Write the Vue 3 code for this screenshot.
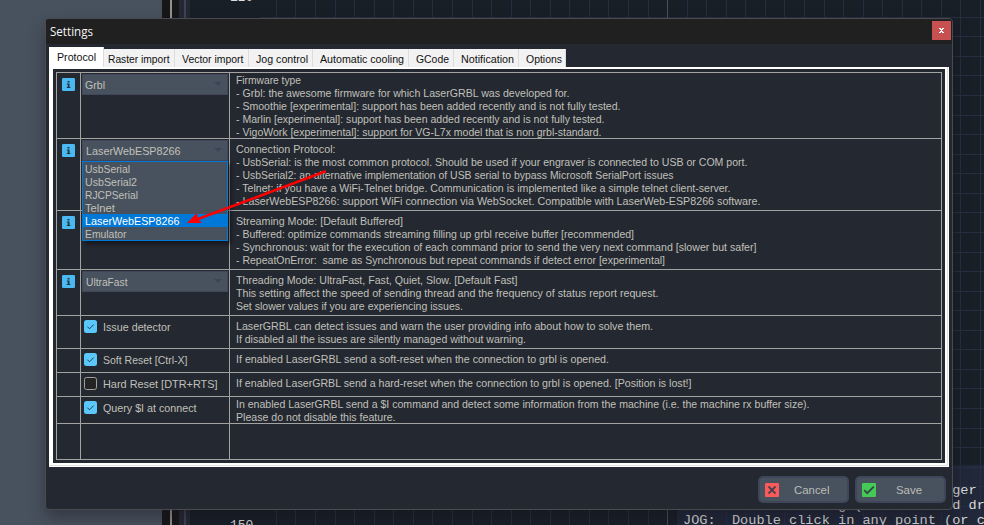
<script setup>
const tabs = [
  { label: 'Protocol', width: 39, box: 55, active: true },
  { label: 'Raster import', width: 61.5, box: 71 },
  { label: 'Vector import', width: 61.5, box: 74 },
  { label: 'Jog control', width: 52, box: 64 },
  { label: 'Automatic cooling', width: 84, box: 96 },
  { label: 'GCode', width: 33, box: 45 },
  { label: 'Notification', width: 53, box: 65 },
  { label: 'Options', width: 36, box: 47 },
]

const rows = [
  {
    kind: 'combo', value: 'Grbl', width: 20, tight: true,
    lines: [
      ['Firmware type', 65],
      ['- Grbl: the awesome firmware for which LaserGRBL was developed for.', 333.5],
      ['- Smoothie [experimental]: support has been added recently and is not fully tested.', 384.5],
      ['- Marlin [experimental]: support has been added recently and is not fully tested.', 368.5],
      ['- VigoWork [experimental]: support for VG-L7x model that is non grbl-standard.', 365.5],
    ],
  },
  {
    kind: 'combo', value: 'LaserWebESP8266', width: 94.5, inset: true, open: true,
    options: [
      ['UsbSerial', 45], ['UsbSerial2', 52], ['RJCPSerial', 53], ['Telnet', 30],
      ['LaserWebESP8266', 94.5], ['Emulator', 41.5],
    ],
    lines: [
      ['Connection Protocol:', 99.5],
      ['- UsbSerial: is the most common protocol. Should be used if your engraver is connected to USB or COM port.', 511.5],
      ['- UsbSerial2: an alternative implementation of USB serial to bypass Microsoft SerialPort issues', 437.5],
      ['- Telnet: if you have a WiFi-Telnet bridge. Communication is implemented like a simple telnet client-server.', 494.5],
      ['- LaserWebESP8266: support WiFi connection via WebSocket. Compatible with LaserWeb-ESP8266 software.', 524.5],
    ],
  },
  {
    kind: 'combo', value: '', width: 0, hidden: true,
    lines: [
      ['Streaming Mode: [Default Buffered]', 167],
      ['- Buffered: optimize commands streaming filling up grbl receive buffer [recommended]', 398],
      ['- Synchronous: wait for the execution of each command prior to send the very next command [slower but safer]', 520.5],
      ['- RepeatOnError:  same as Synchronous but repeat commands if detect error [experimental]', 429],
    ],
  },
  {
    kind: 'combo', value: 'UltraFast', width: 41.5, inset: true,
    lines: [
      ['Threading Mode: UltraFast, Fast, Quiet, Slow. [Default Fast]', 281.5],
      ['This setting affect the speed of sending thread and the frequency of status report request.', 422.5],
      ['Set slower values if you are experiencing issues.', 227],
    ],
  },
  {
    kind: 'check', value: 'Issue detector', width: 67.5, checked: true,
    lines: [
      ['LaserGRBL can detect issues and warn the user providing info about how to solve them.', 417],
      ['If disabled all the issues are silently managed without warning.', 290],
    ],
  },
  {
    kind: 'check', value: 'Soft Reset [Ctrl-X]', width: 84.5, checked: true,
    lines: [['If enabled LaserGRBL send a soft-reset when the connection to grbl is opened.', 373]],
  },
  {
    kind: 'check', value: 'Hard Reset [DTR+RTS]', width: 114.5, checked: false,
    lines: [['If enabled LaserGRBL send a hard-reset when the connection to grbl is opened. [Position is lost!]', 455.5]],
  },
  {
    kind: 'check', value: 'Query $I at connect', width: 93.5, checked: true, tight: true,
    lines: [
      ['In enabled LaserGRBL send a $I command and detect some information from the machine (i.e. the machine rx buffer size).', 573.5],
      ['Please do not disable this feature.', 159.5],
    ],
  },
  { kind: 'empty', lines: [] },
]

const help = [
  ' '.repeat(32) + 'nger',
  'PAN:  Click and drag (or touch and dr',
  'JOG:  Double click in any point (or c',
]

const step = 19.56
const gridX = Array.from({ length: 37 }, (_, i) => Math.floor(276.4 + i * step)).filter((x) => x !== 667)
const gridY = Array.from({ length: 27 }, (_, i) => Math.floor(17.3 + i * step))

// Condenses a run of text horizontally to the given width.
const vFit = (el, { value }) => {
  if (!value) return
  el.style.transform = 'none'
  const natural = el.getBoundingClientRect().width
  el.style.transform = `scaleX(${value / natural})`
}
</script>

<template>
  <div class="screen">
    <svg class="backdrop" width="984" height="525" shape-rendering="crispEdges">
      <rect width="162" height="525" fill="#48525e" />
      <rect x="162" width="17" height="525" fill="#171717" />
      <rect x="170" width="2" height="525" fill="#929292" />
      <rect x="179" width="11" height="525" fill="#242833" />
      <rect x="184" width="2" height="525" fill="#3f4156" />
      <rect x="190" width="794" height="525" fill="#181f27" />
      <rect v-for="x in gridX" :key="'x' + x" :x="x" width="1" height="525" fill="#272e3f" />
      <rect v-for="y in gridY" :key="'y' + y" x="260" :y="y" width="724" height="1" fill="#272e3f" />
      <rect x="667" width="1" height="525" fill="#4a4f5c" />
      <rect x="677" y="465" width="307" height="60" fill="#2a2f48" opacity="0.55" />
    </svg>
    <span class="axis top">120</span>
    <span class="axis bottom">150</span>
    <div class="help">
      <div v-for="h in help" :key="h">{{ h }}</div>
    </div>

    <section class="dialog">
      <header class="titlebar">
        <span v-fit="43" class="title">Settings</span>
        <button class="close">
          <svg width="5" height="5" viewBox="0 0 5 5" shape-rendering="crispEdges">
            <path d="M0 0h2v1h1v-1h2v1h-1v1h-1v1h1v1h1v1h-2v-1h-1v1h-2v-1h1v-1h1v-1h-1v-1h-1z" fill="#fff" />
          </svg>
        </button>
      </header>

      <nav class="tabs">
        <div v-for="t in tabs" :key="t.label" class="tab" :class="{ active: t.active }" :style="{ width: t.box + 'px' }">
          <span v-fit="t.width">{{ t.label }}</span>
        </div>
      </nav>

      <div class="page">
        <div class="table">
          <template v-for="(r, i) in rows" :key="i">
            <div class="cell info">
              <svg v-if="r.kind === 'combo'" width="13" height="13" viewBox="0 0 13 13">
                <rect width="13" height="13" rx="1.2" fill="#4bb9f1" />
                <path d="M5.5 3h2v1.5h-2zM4.8 5.4h2.7v3.6h.9v1h-3.6v-1h.9v-2.6h-.9z" fill="#20333f" />
              </svg>
            </div>
            <div class="cell control" :class="r.kind">
              <template v-if="r.kind === 'combo'">
                <div v-if="!r.hidden" class="combo-box" :class="{ inset: r.inset }">
                  <span v-fit="r.width">{{ r.value }}</span>
                  <svg width="8" height="4" viewBox="0 0 8 4"><path d="M0 0h8l-4 4z" fill="#3f4357" /></svg>
                </div>
                <ul v-if="r.open" class="options">
                  <li v-for="o in r.options" :key="o[0]" :class="{ selected: o[0] === r.value }">
                    <span v-fit="o[1]">{{ o[0] }}</span>
                  </li>
                </ul>
              </template>
              <template v-else-if="r.kind === 'check'">
                <svg width="13" height="13" viewBox="0 0 13 13">
                  <rect v-if="r.checked" width="13" height="13" rx="2.5" fill="#5bc8fb" />
                  <rect v-else x=".5" y=".5" width="12" height="12" rx="2" fill="#242424" stroke="#a0a09e" />
                  <path v-if="r.checked" d="M3.4 6.7l2.1 2.1 4.2-4.2" fill="none" stroke="#1d4257" />
                </svg>
                <span v-fit="r.width">{{ r.value }}</span>
              </template>
            </div>
            <div class="cell desc" :class="{ tight: r.tight }">
              <div v-for="l in r.lines" :key="l[0]" class="line"><span v-fit="l[1]">{{ l[0] }}</span></div>
            </div>
          </template>
        </div>
      </div>

      <footer class="actions">
        <button class="action">
          <svg width="14" height="14" viewBox="0 0 14 14">
            <rect width="14" height="14" rx="1" fill="#fb5a5a" />
            <path d="M3.5 3.5l7 7M10.5 3.5l-7 7" stroke="#48404a" stroke-width="1.8" />
          </svg>
          <span v-fit="35.5" class="caption">Cancel</span>
        </button>
        <button class="action">
          <svg width="14" height="14" viewBox="0 0 14 14">
            <rect width="14" height="14" rx="1" fill="#45c957" />
            <path d="M2.2 7.2l3 3L11.8 3.6" fill="none" stroke="#2f4a44" stroke-width="1.8" />
          </svg>
          <span v-fit="26" class="caption save">Save</span>
        </button>
      </footer>
    </section>

    <svg class="pointer" width="984" height="525">
      <path d="M325 171.5L198 219" stroke="#fe0000" stroke-width="2.6" stroke-linecap="round" />
      <path d="M187 223l9.8-10 .9 5.7 4 4.2z" fill="#fe0000" />
    </svg>
  </div>
</template>

<style>
body {
  margin: 0;
  overflow: hidden;
}
</style>

<style scoped>
.screen {
  position: relative;
  box-sizing: border-box;
  width: 984px;
  height: 525px;
  padding: 18px 0 0 45px;
  overflow: hidden;
  font: 11.8px/13px "Liberation Sans", Arial, sans-serif;
  color: #c0c0ba;
}
span {
  display: inline-block;
  white-space: pre;
  transform-origin: left;
}
.backdrop,
.pointer {
  position: absolute;
  inset: 0;
  pointer-events: none;
}
.pointer {
  z-index: 5;
}
.axis {
  position: absolute;
  left: 230px;
  font: 13px/15px "Liberation Mono", monospace;
  color: #dcdcdc;
}
.axis.top {
  top: -10px;
}
.axis.bottom {
  top: 518px;
}
.help {
  position: absolute;
  left: 683px;
  top: 484px;
  font: 13.6px/14.8px "Liberation Mono", "Courier New", monospace;
  color: #d8d8d8;
  white-space: pre;
}
.dialog {
  position: relative;
  box-sizing: border-box;
  display: flex;
  flex-direction: column;
  width: 908px;
  height: 492px;
  border: 1px solid #484a4e;
  border-radius: 4px;
  background: #242831;
  box-shadow: 0 8px 16px rgba(20, 15, 30, 0.38);
}
.titlebar {
  box-sizing: border-box;
  display: flex;
  justify-content: space-between;
  height: 25px;
  padding: 2px 1px 0 4px;
  border-radius: 3px 3px 0 0;
  background: #202020;
}
.title {
  align-self: flex-start;
  padding-top: 1px;
  font: 12.5px/20px "Open Sans", "Noto Sans", sans-serif;
  color: #f4f4f4;
}
.close {
  display: flex;
  align-items: center;
  justify-content: center;
  width: 19px;
  height: 19px;
  padding: 0;
  border: 0;
  background: #c75050;
}
.tabs {
  display: flex;
  align-items: flex-end;
  height: 23px;
  padding-left: 3px;
}
.tab {
  box-sizing: border-box;
  height: 18px;
  padding: 4px 0 0 7px;
  border-right: 1px solid #dcdcdc;
  background: #f2f2f2;
  color: #101010;
}
.tab:nth-child(2) {
  padding-left: 4px;
}
.tab.active {
  height: 20px;
  padding: 4px 0 0 8px;
  background: #fff;
}
.page {
  box-sizing: border-box;
  width: 900px;
  height: 400px;
  margin-left: 3px;
  padding: 2px 4px 4px;
  background: #fff;
  box-shadow: inset -1px -1px #fff, inset -2px -2px #e2e0e0;
}
.table {
  display: grid;
  grid-template-columns: 23px 148px 711px;
  grid-template-rows: 65px 71px 58px 45px 32px 23px 23px 26px 35px;
  gap: 1px;
  border: 3px solid #242831;
  background: #a3a3a1;
  padding: 1px;
}
.cell {
  background: #242831;
}
.info svg {
  display: block;
  margin: 5px 0 0 5px;
}
.control {
  position: relative;
}
.combo {
  padding: 1px;
}
.combo-box {
  box-sizing: border-box;
  display: flex;
  justify-content: space-between;
  align-items: center;
  height: 21px;
  padding: 0 5px 0 2px;
  border: 1px solid #42465a;
  background: #48525e;
}
.combo-box.inset {
  padding-left: 3px;
}
.combo-box span {
  padding-top: 2px;
}
.combo-box svg {
  margin-bottom: 2px;
}
.options {
  position: absolute;
  z-index: 2;
  left: 1px;
  top: 22px;
  box-sizing: border-box;
  width: 146px;
  margin: 0;
  padding: 0;
  border: 1px solid #0078d7;
  background: #48525e;
  list-style: none;
  box-shadow: 3px 3px 4px rgba(0, 0, 0, 0.45);
}
.options li {
  box-sizing: border-box;
  height: 13px;
  padding: 1px 0 0 2px;
}
.options .selected {
  background: #0078d7;
  color: #fff;
}
.check {
  display: flex;
  align-items: flex-start;
  gap: 6px;
  padding: 4px 0 0 3px;
  box-sizing: border-box;
}
.check span {
  margin-top: 1px;
}
.desc {
  padding: 4px 0 0 6px;
  box-sizing: border-box;
}
.desc.tight {
  padding-top: 1px;
}
.line {
  height: 13px;
}
.actions {
  display: flex;
  justify-content: flex-end;
  gap: 6px;
  padding: 9px 6px 0 0;
}
.action {
  box-sizing: border-box;
  display: flex;
  align-items: center;
  width: 91px;
  height: 27px;
  padding: 0 0 0 5px;
  border: 2px solid #40465a;
  border-radius: 5px;
  background: #48525e;
  font: inherit;
  color: #bdbdb8;
}
.caption {
  margin-left: 15px;
  padding-top: 1px;
}
.caption.save {
  margin-left: 20px;
}
</style>
